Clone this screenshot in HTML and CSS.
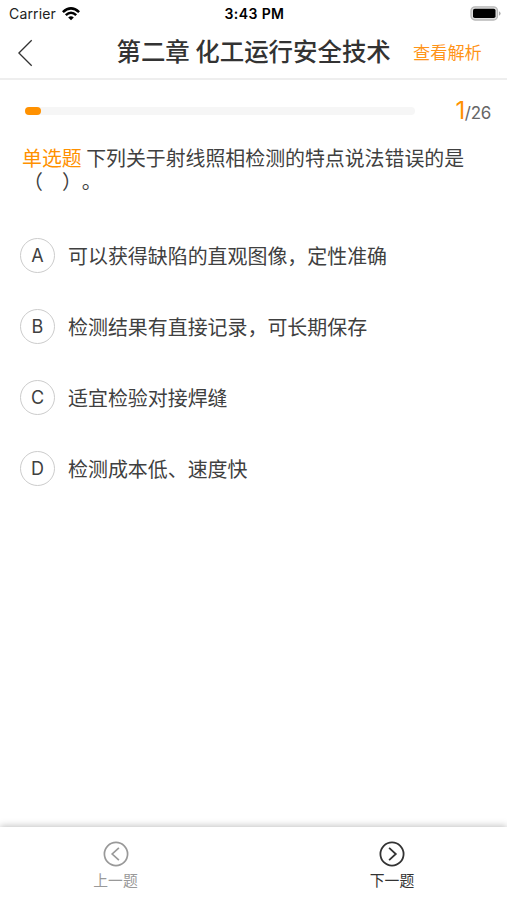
FILE: index.html
```html
<!DOCTYPE html>
<html lang="zh-CN">
<head>
<meta charset="utf-8">
<meta name="viewport" content="width=device-width, initial-scale=1">
<title>第二章 化工运行安全技术</title>
<link rel="stylesheet" href="styles.css">
</head>
<body>
<div class="screen">
  <div class="status">
    <div class="carrier">
      <span>Carrier</span>
      <svg class="wifi" width="18" height="14" viewBox="0 0 18 14" fill="none" stroke="#000" stroke-width="2.6">
        <path d="M0.9 5.1Q9 -2.3 17.1 5.1"/>
        <path d="M3.8 8.1Q9 3.4 14.2 8.1"/>
        <path d="M6.2 10.4Q9 8.2 11.8 10.4L9 13.2Z" fill="#000" stroke="none"/>
      </svg>
    </div>
    <span class="time">3:43 PM</span>
    <svg class="battery" width="31" height="15" viewBox="0 0 31 15">
      <rect x="1" y="0.8" width="26.5" height="13.2" rx="4" fill="#ddd" stroke="#b8b8b8" stroke-width="1.3"/>
      <rect x="3" y="2.7" width="22.5" height="9.4" rx="1.8" fill="#000"/>
      <path d="M29 5.2Q30.6 6 30.6 7.4T29 9.7Z" fill="#aaa"/>
    </svg>
  </div>
  <header class="nav">
    <svg class="back" width="16" height="28" viewBox="0 0 16 28" fill="none" stroke="#333" stroke-width="1.3"><path d="M13.7 1.2L0.9 14L13.7 26.8"/></svg>
    <h1 class="title">第二章 化工运行安全技术</h1>
    <a class="analysis">查看解析</a>
  </header>
  <main class="content">
    <div class="progress">
      <div class="track"><div class="fill"></div></div>
      <div class="count"><span class="current">1</span>/26</div>
    </div>
    <p class="question"><span class="kind">单选题</span> 下列关于射线照相检测的特点说法错误的是<br><span class="answer">（<span class="blank"></span>）。</span></p>
    <ul class="options">
      <li class="option"><span class="letter">A</span><span class="text">可以获得缺陷的直观图像，定性准确</span></li>
      <li class="option"><span class="letter">B</span><span class="text">检测结果有直接记录，可长期保存</span></li>
      <li class="option"><span class="letter">C</span><span class="text">适宜检验对接焊缝</span></li>
      <li class="option"><span class="letter">D</span><span class="text">检测成本低、速度快</span></li>
    </ul>
  </main>
  <footer class="tabs">
    <div class="tab tab-prev">
      <svg width="26" height="26" viewBox="0 0 26 26" fill="none" stroke="currentColor" stroke-width="1.7"><circle cx="13" cy="13" r="11.6"/><path d="M15.9 6.8L9.2 13L15.9 19.2"/></svg>
      <span>上一题</span>
    </div>
    <div class="tab tab-next">
      <svg width="26" height="26" viewBox="0 0 26 26" fill="none" stroke="currentColor" stroke-width="1.8"><circle cx="13" cy="13" r="11.6"/><path d="M10.1 6.8L16.8 13L10.1 19.2"/></svg>
      <span>下一题</span>
    </div>
  </footer>
</div>
</body>
</html>
```
FILE: styles.css
```css
* { box-sizing: border-box; }
body {
  margin: 0;
  background: #fff;
  color: #404040;
  font-family: Inter, "Noto Sans CJK SC", sans-serif;
  text-spacing-trim: space-all;
}
.screen {
  display: flex;
  flex-direction: column;
  height: 900px;
  overflow: hidden;
}
.status {
  display: grid;
  grid-template-columns: 1fr auto 1fr;
  align-items: center;
  height: 27px;
  padding: 0 6px 0 8px;
  color: #000;
  font-size: 14px;
}
.carrier { display: flex; align-items: center; gap: 6px; padding-left: 1px; color: #222; letter-spacing: 0.15px; }
.time { font-weight: 600; letter-spacing: 0.4px; }
.battery { justify-self: end; }
.nav {
  display: grid;
  grid-template-columns: 98.5px 274px 1fr;
  align-items: center;
  height: 53px;
  padding-left: 18px;
  border-bottom: 2px solid #eee;
}
.title {
  margin: 0 0 3px;
  color: #333;
  font-family: "Noto Sans CJK SC", sans-serif;
  font-size: 24.45px;
  font-weight: 500;
  line-height: 36px;
  white-space: nowrap;
}
.analysis {
  padding-left: 22.5px;
  color: #ff9418;
  font-size: 17.2px;
  line-height: 26px;
  white-space: nowrap;
}
.content { flex: 1; }
.progress {
  display: flex;
  align-items: center;
  justify-content: space-between;
  height: 62px;
  padding: 0 16px 0 25px;
}
.track { width: 390px; height: 8px; border-radius: 4px; background: #f6f6f6; }
.fill { width: 16px; height: 8px; border-radius: 4px; background: #ff9100; }
.count { padding-top: 2px; color: #666; font-size: 17px; line-height: 30px; letter-spacing: -0.3px; }
.current { color: #ff9100; font-size: 24px; }
.question {
  margin: 4px 0 0;
  padding-left: 22px;
  font-family: "Noto Sans CJK SC", sans-serif;
  font-size: 19.9px;
  line-height: 23px;
  white-space: nowrap;
}
.kind { color: #ff9100; }
.answer { margin-left: 1px; }
.blank { display: inline-block; width: 19px; }
.options {
  display: grid;
  gap: 37px;
  margin: 46px 0 0;
  padding: 0 0 0 20px;
  list-style: none;
}
.option {
  display: flex;
  align-items: center;
  gap: 13px;
  height: 34px;
  font-size: 19.95px;
  line-height: 30px;
}
.text { padding-top: 3px; }
.letter {
  display: flex;
  align-items: center;
  justify-content: center;
  width: 35px;
  height: 35px;
  padding-top: 2px;
  border: 1.5px solid #ccc;
  border-radius: 50%;
  font-size: 18px;
}
.tabs {
  display: grid;
  grid-template-columns: 231px 1fr;
  height: 73px;
  background: #fff;
  box-shadow: 0 -1px 7px rgba(0, 0, 0, 0.25);
}
.tab {
  display: flex;
  flex-direction: column;
  align-items: center;
  padding-top: 14px;
  font-size: 14.8px;
  line-height: 28px;
}
.tab-prev { color: #999; }
.tab-next { margin-right: -46px; color: #333; }
```
